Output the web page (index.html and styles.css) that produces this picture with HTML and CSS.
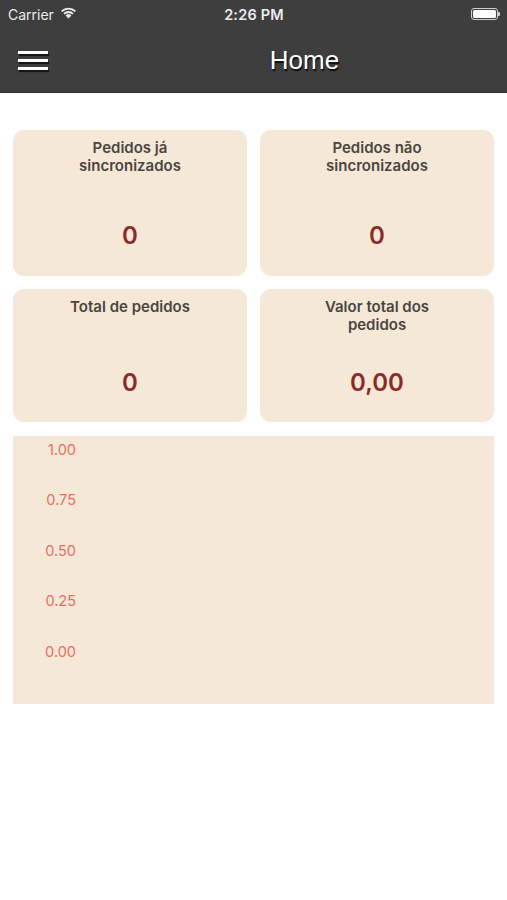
FILE: index.html
```html
<!DOCTYPE html>
<html lang="pt">

<head>
  <meta charset="UTF-8">
  <meta name="viewport" content="width=device-width, initial-scale=1.0">
  <title>Home</title>
  <link rel="stylesheet" href="styles.css">
</head>

<body>
  <header class="topbar">
    <div class="status">
      <div class="status-left">
        <span>Carrier</span>
        <svg class="wifi" width="17" height="12" viewBox="0 0 17 12">
          <path d="M8.5 11.5 L5.6 8.4 A4.2 4.2 0 0 1 11.4 8.4 Z" fill="#eee" />
          <path d="M3.4 6.2 A7.3 7.3 0 0 1 13.6 6.2 L12.3 7.5 A5.5 5.5 0 0 0 4.7 7.5 Z" fill="#eee" />
          <path d="M1 3.8 A10.7 10.7 0 0 1 16 3.8 L14.7 5.1 A8.9 8.9 0 0 0 2.3 5.1 Z" fill="#eee" />
        </svg>
      </div>
      <div class="status-time">2:26 PM</div>
      <div class="status-right">
        <div class="battery">
          <div class="battery-fill"></div>
        </div>
        <div class="battery-tip"></div>
      </div>
    </div>
    <nav class="navbar">
      <div class="menu">
        <span></span>
        <span></span>
        <span></span>
      </div>
      <h1 class="title">Home</h1>
    </nav>
  </header>

  <main class="content">
    <section class="cards">
      <div class="card tall">
        <div class="card-title">Pedidos já<br>sincronizados</div>
        <div class="card-value">0</div>
      </div>
      <div class="card tall">
        <div class="card-title">Pedidos não<br>sincronizados</div>
        <div class="card-value">0</div>
      </div>
      <div class="card">
        <div class="card-title">Total de pedidos</div>
        <div class="card-value">0</div>
      </div>
      <div class="card">
        <div class="card-title">Valor total dos<br>pedidos</div>
        <div class="card-value">0,00</div>
      </div>
    </section>

    <!-- gráfico vazio -->
    <section class="chart">
      <div class="axis">
        <span>1.00</span>
        <span>0.75</span>
        <span>0.50</span>
        <span>0.25</span>
        <span>0.00</span>
      </div>
    </section>
  </main>
</body>

</html>
```

FILE: styles.css
```css
body {
  margin: 0;
  background: #fefefe;
  font-family: Inter, "Liberation Sans", Arial, sans-serif;
}

/* barra superior */
.topbar {
  background: #3e3e3e;
  color: #fff;
  height: 93px;
  border-bottom: 1px solid #2e2e2e;
  box-sizing: border-box;
}

.status {
  height: 28px;
  display: flex;
  align-items: center;
  justify-content: space-between;
  padding: 0 7px 0 8px;
  font-size: 14px;
  color: #ececec;
}

.status-left {
  display: flex;
  align-items: center;
  gap: 6px;
  width: 100px;
}

.wifi {
  margin-top: -2px;
}

.status-time {
  font-weight: 600;
  font-size: 14.5px;
  letter-spacing: 0.2px;
}

.status-right {
  width: 100px;
  display: flex;
  justify-content: flex-end;
  align-items: center;
}

.battery {
  width: 27px;
  height: 12px;
  border: 1px solid #cfcfcf;
  border-radius: 3px;
  padding: 1px;
  box-sizing: border-box;
}

.battery-fill {
  width: 100%;
  height: 100%;
  background: #fff;
  border-radius: 1.5px;
}

.battery-tip {
  width: 2px;
  height: 4px;
  background: #cfcfcf;
  border-radius: 0 1px 1px 0;
}

.navbar {
  height: 64px;
  display: flex;
  align-items: center;
  padding: 0 18px;
}

.menu {
  width: 30px;
  display: flex;
  flex-direction: column;
  gap: 5px;
  margin-top: 0;
}

.menu span {
  display: block;
  height: 3px;
  background: #fff;
  box-shadow: 1px 2px 1px rgba(0, 0, 0, 0.7);
}

.title {
  flex: 1;
  margin: 0;
  padding-left: 72px;
  text-align: center;
  font-family: "Liberation Sans", Arial, sans-serif;
  font-size: 26px;
  font-weight: normal;
  text-shadow: 1px 2px 1px rgba(0, 0, 0, 0.8);
}

/* conteúdo */
.content {
  padding: 37px 13px 0 13px;
}

.cards {
  display: grid;
  grid-template-columns: 1fr 1fr;
  column-gap: 13px;
  row-gap: 13px;
}

.card {
  background: #f5e8d7;
  border-radius: 11px;
  height: 133px;
  display: flex;
  flex-direction: column;
  align-items: center;
  padding-top: 9px;
  box-sizing: border-box;
}

.card.tall {
  height: 146px;
}

.card-title {
  color: #4b4540;
  font-weight: 600;
  font-size: 15px;
  line-height: 18px;
  text-align: center;
  height: 60px;
}

.card-value {
  color: #8a2b29;
  font-weight: 600;
  font-size: 24px;
  margin-top: 22px;
}

.card:not(.tall) .card-value {
  margin-top: 10px;
}

.chart {
  margin-top: 14px;
  height: 268px;
  background: #f5e8d7;
}

.axis {
  width: 63px;
  display: flex;
  flex-direction: column;
  align-items: flex-end;
  gap: 30.4px;
  padding-top: 4px;
}

.axis span {
  color: #ef6c62;
  font-size: 14.5px;
  line-height: 20px;
}
```
